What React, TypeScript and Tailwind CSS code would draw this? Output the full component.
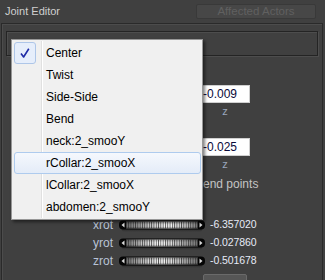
import React from 'react';

const font = { fontFamily: '"Liberation Sans", Arial, sans-serif' };

const items = ['Center', 'Twist', 'Side-Side', 'Bend', 'neck:2_smooY', 'rCollar:2_smooX', 'lCollar:2_smooX', 'abdomen:2_smooY'];

const rotations = [
  { label: 'xrot', value: '-6.357020', peak: 0.58 },
  { label: 'yrot', value: '-0.027860', peak: 0.47 },
  { label: 'zrot', value: '-0.501678', peak: 0.49 },
];

function Dial({ id, peak }: { id: string; peak: number }) {
  return (
    <svg width="86" height="12" viewBox="0 0 86 12">
      <defs>
        <linearGradient id={`h-${id}`} x1="0" x2="1" y1="0" y2="0">
          <stop offset="0" stopColor="#707070" />
          <stop offset={peak - 0.25} stopColor="#cacaca" />
          <stop offset={peak} stopColor="#ffffff" />
          <stop offset={peak + 0.25} stopColor="#cacaca" />
          <stop offset="1" stopColor="#707070" />
        </linearGradient>
        <linearGradient id={`v-${id}`} x1="0" x2="0" y1="0" y2="1">
          <stop offset="0" stopColor="#000" stopOpacity="0.3" />
          <stop offset="0.4" stopColor="#000" stopOpacity="0" />
          <stop offset="0.7" stopColor="#000" stopOpacity="0" />
          <stop offset="1" stopColor="#000" stopOpacity="0.4" />
        </linearGradient>
        <pattern id={`r-${id}`} width="2.3" height="10" patternUnits="userSpaceOnUse">
          <rect width="0.9" height="10" fill="#2e2e2e" fillOpacity="0.8" />
        </pattern>
        <linearGradient id={`s-${id}`} x1="0" x2="0" y1="0" y2="1">
          <stop offset="0" stopColor="#000" stopOpacity="0.45" />
          <stop offset="1" stopColor="#000" stopOpacity="0" />
        </linearGradient>
      </defs>
      <rect x="3" y="8" width="80" height="4" rx="2" fill={`url(#s-${id})`} />
      <rect x="0" y="0.5" width="86" height="9" rx="4" fill="#050505" />
      <polygon points="2.5,5 5.5,2.5 5.5,7.5" fill="#d8d8d8" />
      <polygon points="83.5,5 80.5,2.5 80.5,7.5" fill="#d8d8d8" />
      <rect x="7" y="1.5" width="72" height="7" fill={`url(#h-${id})`} />
      <rect x="7" y="1.5" width="72" height="7" fill={`url(#r-${id})`} />
      <rect x="7" y="1.5" width="72" height="7" fill={`url(#v-${id})`} />
    </svg>
  );
}

function CoordRow({ value }: { value: string }) {
  return (
    <div className="flex gap-[3px] pl-[92px]">
      {['x', 'y', 'z'].map((axis) => (
        <div key={axis} className="flex flex-col items-center w-[50px]">
          <div className="w-[50px] h-[18px] bg-white border border-[#d0d0d0] flex items-center pl-[2px] text-[12px] text-[#0a0a3a]">
            {axis === 'z' ? value : ''}
          </div>
          <div className="mt-[2px] h-[12px] leading-[12px] text-[11px] text-[#9aa6bc]">{axis === 'z' ? axis : ''}</div>
        </div>
      ))}
    </div>
  );
}

export default function App() {
  return (
    <div className="relative w-[325px] h-[280px] overflow-hidden bg-[#404040]" style={font}>
      {/* Title */}
      <div className="flex items-center justify-between h-[23px] pl-[5px] pr-[9px]">
        <span className="text-[11px] text-[#cfcfcf]">Joint Editor</span>
        <button className="w-[120px] h-[15px] rounded-[2px] bg-[#474747] border border-[#393939] text-[11.5px] leading-none text-[#606060]">
          Affected Actors
        </button>
      </div>

      {/* Panel */}
      <div className="ml-[1px] mr-[2px] h-[257px] border-l border-t border-r border-[#2a2a2a] shadow-[inset_1px_1px_0_#4c4c4c]">
        <div className="ml-[4px] mr-[4px] mt-[7px] h-[25px] border border-[#242424] shadow-[inset_1px_1px_0_#4d4d4d,1px_1px_0_#4d4d4d]" />

        <div className="mt-[29px]">
          <CoordRow value="-0.009" />
        </div>
        <div className="mt-[21px]">
          <CoordRow value="-0.025" />
        </div>

        <div className="mt-[8px] h-[12px] flex items-center pl-[201px] text-[12px] text-[#c4c4c4]">end points</div>

        <div className="mt-[26px] flex flex-col">
          {rotations.map((r) => (
            <div key={r.label} className="flex items-center h-[18px]">
              <span className="w-[111px] text-right text-[12px] text-[#b9c3d6]">{r.label}</span>
              <div className="ml-[6px] flex items-center h-[12px] mt-[2px]">
                <Dial id={r.label} peak={r.peak} />
              </div>
              <span className="ml-[5px] text-[10.5px] tracking-[-0.1px] text-[#e6eaf6]">{r.value}</span>
            </div>
          ))}
        </div>

        <div className="mt-[4px] ml-[201px] w-[44px] h-[20px] rounded-[2px] bg-[#565656] border border-[#6a6a6a]" />
      </div>

      {/* Dropdown menu */}
      <div className="absolute left-[11px] top-[39px] w-[192px] h-[181px] bg-[#f0f0f0] border border-[#979797] shadow-[2px_2px_3px_rgba(0,0,0,0.5)] pt-[2px]">
        <div className="absolute left-[29px] top-[1px] bottom-[1px] w-[2px] border-l border-[#e0e0e0] border-r border-r-white" />
        {items.map((it, i) => (
          <div
            key={it}
            className={`relative mx-[2px] w-[187px] h-[22px] flex items-center text-[12px] text-black rounded-[3px] ${
              i === 5 ? 'bg-gradient-to-b from-[#f5f8fd] to-[#e4ecf8] border border-[#aecbee] pl-[31px]' : 'pl-[32px]'
            }`}
          >
            {i === 0 && (
              <div className="absolute left-0 top-0 w-[22px] h-[22px] rounded-[3px] bg-[#e6eefb] border border-[#aec6e8] flex items-center justify-center">
                <svg width="12" height="12" viewBox="0 0 12 12">
                  <path d="M2 6.5 L4.6 10 L9.8 1.8" fill="none" stroke="#1f2ba6" strokeWidth="1.6" strokeLinejoin="round" />
                </svg>
              </div>
            )}
            {it}
          </div>
        ))}
      </div>
    </div>
  );
}
